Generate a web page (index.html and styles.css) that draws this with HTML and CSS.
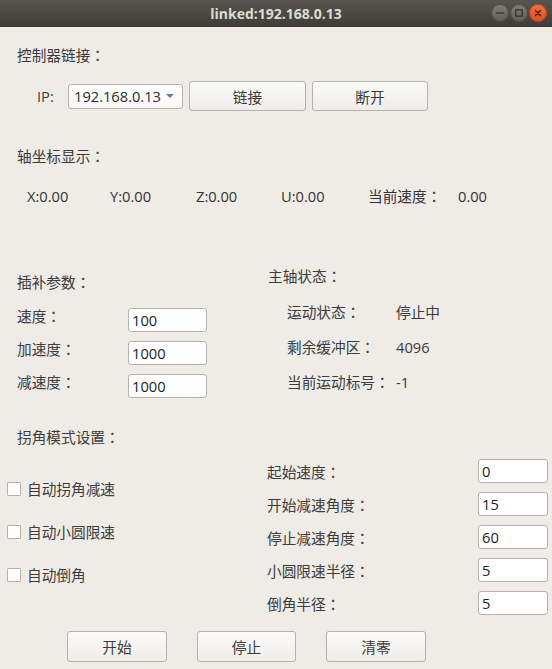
FILE: index.html
```html
<!DOCTYPE html>
<html lang="zh-CN">
<head>
<meta charset="utf-8">
<title>linked:192.168.0.13</title>
<link rel="stylesheet" href="styles.css">
</head>
<body>
<div class="window">
  <header class="titlebar">
    <span class="tb-spacer"></span>
    <span class="title">linked:192.168.0.13</span>
    <div class="wm-buttons">
      <span class="wm wm-gray"><svg width="10" height="10" viewBox="0 0 10 10"><path d="M1.5 5h7" stroke="#3a3935" stroke-width="1.6" stroke-linecap="round"/></svg></span>
      <span class="wm wm-gray"><svg width="10" height="10" viewBox="0 0 10 10"><rect x="1.8" y="1.8" width="6.4" height="6.4" fill="none" stroke="#3a3935" stroke-width="1.4"/></svg></span>
      <span class="wm wm-close"><svg width="10" height="10" viewBox="0 0 10 10"><path d="M2.5 2.5l5 5M7.5 2.5l-5 5" stroke="#5c1d08" stroke-width="1.5" stroke-linecap="round"/></svg></span>
    </div>
  </header>

  <main class="content">
    <section class="connect">
      <div class="heading">控制器链接：</div>
      <div class="ip-row">
        <span class="ip-label">IP:</span>
        <div class="combo"><span>192.168.0.13</span><span class="arrow"></span></div>
        <button class="btn btn-connect">链接</button>
        <button class="btn btn-disconnect">断开</button>
      </div>
    </section>

    <section class="axes">
      <div class="heading">轴坐标显示：</div>
      <div class="axis-row">
        <span>X:0.00</span>
        <span>Y:0.00</span>
        <span>Z:0.00</span>
        <span>U:0.00</span>
        <span>当前速度：</span>
        <span>0.00</span>
      </div>
    </section>

    <section class="params">
      <div class="interp">
        <div class="heading">插补参数：</div>
        <div class="field-list">
          <div class="field"><label>速度：</label><input class="num" type="text" value="100"></div>
          <div class="field"><label>加速度：</label><input class="num" type="text" value="1000"></div>
          <div class="field"><label>减速度：</label><input class="num" type="text" value="1000"></div>
        </div>
      </div>
      <div class="status">
        <div class="heading">主轴状态：</div>
        <div class="status-list">
          <div class="status-row"><span class="status-key">运动状态：</span><span>停止中</span></div>
          <div class="status-row"><span class="status-key">剩余缓冲区：</span><span>4096</span></div>
          <div class="status-row"><span class="status-key">当前运动标号：</span><span>-1</span></div>
        </div>
      </div>
    </section>

    <section class="corner">
      <div class="corner-left">
        <div class="heading">拐角模式设置：</div>
        <div class="check-list">
          <div class="check-row"><span class="check-box"></span><span>自动拐角减速</span></div>
          <div class="check-row"><span class="check-box"></span><span>自动小圆限速</span></div>
          <div class="check-row"><span class="check-box"></span><span>自动倒角</span></div>
        </div>
      </div>
      <div class="corner-right">
        <div class="corner-field"><label>起始速度：</label><input class="num small" type="text" value="0"></div>
        <div class="corner-field"><label>开始减速角度：</label><input class="num small" type="text" value="15"></div>
        <div class="corner-field"><label>停止减速角度：</label><input class="num small" type="text" value="60"></div>
        <div class="corner-field"><label>小圆限速半径：</label><input class="num small" type="text" value="5"></div>
        <div class="corner-field"><label>倒角半径：</label><input class="num small" type="text" value="5"></div>
      </div>
    </section>

    <section class="actions">
      <button class="btn btn-action">开始</button>
      <button class="btn btn-action btn-narrow">停止</button>
      <button class="btn btn-action">清零</button>
    </section>
  </main>
</div>
</body>
</html>
```

FILE: styles.css
```css
* {
  box-sizing: border-box;
}

html, body {
  margin: 0;
  padding: 0;
}

body {
  width: 552px;
  height: 669px;
  overflow: hidden;
  background: #efebe7;
  font-family: "Open Sans", "Noto Sans CJK JP", "Noto Sans CJK SC", sans-serif;
  font-size: 14.67px;
  font-feature-settings: "locl" 0;
  color: #3c3c3c;
}

.window {
  display: flex;
  flex-direction: column;
  height: 669px;
}

/* ---------- title bar ---------- */
.titlebar {
  flex: none;
  height: 27px;
  display: grid;
  grid-template-columns: 1fr auto 1fr;
  align-items: center;
  background: linear-gradient(#57554f, #3d3c38);
}

.title {
  color: #dfdbd2;
  font-weight: 700;
  font-size: 14px;
  line-height: 25px;
}

.wm-buttons {
  justify-self: end;
  display: flex;
  gap: 1px;
  padding-right: 5px;
  padding-bottom: 1px;
}

.wm {
  width: 18px;
  height: 18px;
  border-radius: 50%;
  display: flex;
  align-items: center;
  justify-content: center;
}

.wm-gray {
  background: linear-gradient(#807e79, #5f5d58);
  box-shadow: inset 0 0 0 1px #4a4844;
}

.wm-close {
  background: linear-gradient(#f47449, #dc4c1e);
  box-shadow: inset 0 0 0 1px #b53d14;
}

/* ---------- content ---------- */
.content {
  flex: 1;
  display: flex;
  flex-direction: column;
  padding-top: 18px;
}

.heading {
  line-height: 20px;
  padding-left: 17px;
}

.ip-row {
  display: flex;
  align-items: center;
  height: 30px;
  margin-top: 16px;
  padding-left: 37px;
}

.ip-label {
  width: 31px;
}

.combo {
  width: 115px;
  height: 25px;
  margin-right: 6px;
  padding: 0 8px 0 5px;
  display: flex;
  align-items: center;
  justify-content: space-between;
  border: 1px solid #b5b1ab;
  border-radius: 3px;
  background: linear-gradient(#ffffff, #f7f6f5);
  color: #2e2e2e;
}

.arrow {
  width: 0;
  height: 0;
  border-left: 4px solid transparent;
  border-right: 4px solid transparent;
  border-top: 4px solid #7c7b78;
}

.btn {
  height: 30px;
  padding: 0;
  border: 1px solid #b5b1ab;
  border-radius: 3px;
  background: linear-gradient(#fafaf9, #efedea);
  font: inherit;
  color: #3c3c3c;
}

.btn-connect {
  width: 117px;
  margin-right: 6px;
}

.btn-disconnect {
  width: 116px;
}

.axes .heading {
  margin-top: 35px;
}

.axis-row {
  display: grid;
  grid-template-columns: 83px 86px 85px 87px 90px auto;
  margin-top: 20px;
  margin-bottom: 2px;
  padding-left: 27px;
  line-height: 20px;
  color: #333;
}

/* ---------- params ---------- */
.params {
  display: grid;
  grid-template-columns: 268px 1fr;
  margin-top: 58px;
}

.interp {
  padding-top: 6px;
  padding-left: 17px;
}

.interp .heading,
.status .heading {
  padding-left: 0;
}

.field-list {
  display: flex;
  flex-direction: column;
  gap: 9px;
  margin-top: 16px;
}

.field {
  display: flex;
  height: 24px;
}

.field label {
  width: 111px;
  line-height: 17px;
}

.num {
  height: 24px;
  padding: 0 3px;
  border: 1px solid #b5b1ab;
  border-radius: 3px;
  background: #ffffff;
  font: inherit;
  color: #222;
  outline: none;
}

.field .num {
  width: 79px;
}

.status-list {
  display: flex;
  flex-direction: column;
  gap: 15px;
  margin-top: 16px;
  padding-left: 19px;
}

.status-row {
  display: flex;
  line-height: 20px;
}

.status-key {
  width: 109px;
}

/* ---------- corner mode ---------- */
.corner {
  display: grid;
  grid-template-columns: 267px 1fr;
  align-items: start;
  margin-top: 29px;
}

.check-list {
  display: flex;
  flex-direction: column;
  gap: 23px;
  margin-top: 32px;
  padding-left: 7px;
}

.check-row {
  display: flex;
  align-items: center;
  gap: 6px;
  line-height: 20px;
}

.check-box {
  width: 14px;
  height: 14px;
  border: 1px solid #b5b1ab;
  border-radius: 1px;
  background: #ffffff;
}

.corner-right {
  display: flex;
  flex-direction: column;
  gap: 9px;
  margin-top: 32px;
  padding-right: 4px;
}

.corner-field {
  display: flex;
  align-items: center;
  justify-content: space-between;
  height: 24px;
}

.corner-field .small {
  width: 70px;
}

/* ---------- actions ---------- */
.actions {
  display: flex;
  gap: 30px;
  margin-top: 16px;
  padding-left: 67px;
}

.btn-action {
  width: 100px;
  height: 31px;
}

.btn-narrow {
  width: 99px;
}
```
